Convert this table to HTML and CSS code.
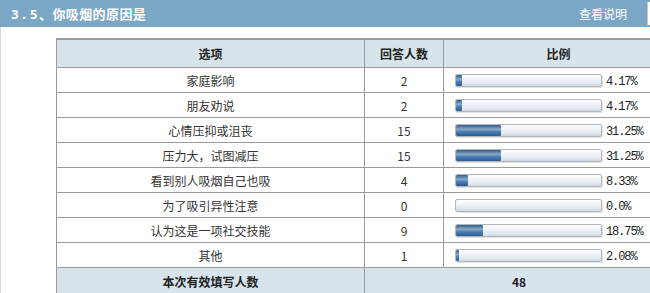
FILE: index.html
```html
<!DOCTYPE html>
<html lang="zh">
<head>
<meta charset="utf-8">
<link rel="stylesheet" href="styles.css">
</head>
<body>
<div class="page">
  <div class="qhead">
    <div class="qtitle"><span class="qnum">3.5</span>、你吸烟的原因是</div>
    <div class="qlink">查看说明</div>
    <div class="qbox"></div>
  </div>
  <div class="content">
    <table class="stat">
      <colgroup><col class="c1"><col class="c2"><col class="c3"></colgroup>
      <thead>
        <tr><th>选项</th><th>回答人数</th><th>比例</th></tr>
      </thead>
      <tbody>
        <tr><td>家庭影响</td><td>2</td><td><div class="pc"><span class="bar"><span class="fill" style="width:4.17%"></span></span><span class="pct">4.17%</span></div></td></tr>
        <tr><td>朋友劝说</td><td>2</td><td><div class="pc"><span class="bar"><span class="fill" style="width:4.17%"></span></span><span class="pct">4.17%</span></div></td></tr>
        <tr><td>心情压抑或沮丧</td><td>15</td><td><div class="pc"><span class="bar"><span class="fill" style="width:31.25%"></span></span><span class="pct">31.25%</span></div></td></tr>
        <tr><td>压力大，试图减压</td><td>15</td><td><div class="pc"><span class="bar"><span class="fill" style="width:31.25%"></span></span><span class="pct">31.25%</span></div></td></tr>
        <tr><td>看到别人吸烟自己也吸</td><td>4</td><td><div class="pc"><span class="bar"><span class="fill" style="width:8.33%"></span></span><span class="pct">8.33%</span></div></td></tr>
        <tr><td>为了吸引异性注意</td><td>0</td><td><div class="pc"><span class="bar"><span class="fill" style="width:0%"></span></span><span class="pct">0.0%</span></div></td></tr>
        <tr><td>认为这是一项社交技能</td><td>9</td><td><div class="pc"><span class="bar"><span class="fill" style="width:18.75%"></span></span><span class="pct">18.75%</span></div></td></tr>
        <tr><td>其他</td><td>1</td><td><div class="pc"><span class="bar"><span class="fill" style="width:2.08%"></span></span><span class="pct">2.08%</span></div></td></tr>
      </tbody>
      <tfoot>
        <tr><th>本次有效填写人数</th><th colspan="2">48</th></tr>
      </tfoot>
    </table>
  </div>
</div>
</body>
</html>
```

FILE: styles.css
```css
html, body {
  margin: 0;
  padding: 0;
  overflow: hidden;
  background: #fff;
}
body {
  font-family: "Noto Sans CJK SC", "DejaVu Sans", sans-serif;
  font-size: 12px;
  color: #333;
}
.page {
  width: 700px;
  height: 293px;
  border-left: 1px solid #d9d9d9;
  box-sizing: border-box;
}
.qhead {
  position: relative;
  height: 27px;
  margin-left: -1px;
  width: 650px;
  background: #7ba7c7;
  display: flex;
  align-items: center;
}
.qtitle {
  color: #fff;
  font-weight: bold;
  font-size: 13px;
  letter-spacing: 0.4px;
  padding-left: 11px;
  flex: 1;
  line-height: 27px;
}
.qnum {
  font-family: "DejaVu Sans Mono", "Liberation Mono", monospace;
  font-size: 13px;
  letter-spacing: 1.5px;
}
.qlink {
  color: #fff;
  font-size: 12px;
  margin-right: 23px;
  line-height: 27px;
}
.qbox {
  position: absolute;
  left: 647px;
  top: 2px;
  width: 3px;
  height: 23px;
  background: #fff;
  border-left: 1px solid #c8c8c8;
  box-sizing: border-box;
}
.content {
  padding: 11px 0 0 55px;
}
.stat {
  border-collapse: collapse;
  width: 617px;
  table-layout: fixed;
}
.c1 { width: 308px; }
.c2 { width: 79px; }
.c3 { width: 230px; }
.stat th, .stat td {
  border: 1px solid #9a9a9a;
  text-align: center;
  padding: 0;
}
.stat thead th {
  background: #d8e4ec;
  height: 27px;
  font-weight: bold;
  color: #222;
  border-top: 2px solid #9a9a9a;
}
.stat tbody td {
  height: 24px;
  color: #333;
}
.stat tfoot th {
  background: #d8e4ec;
  height: 26px;
  font-weight: bold;
  color: #222;
}
.pc {
  display: flex;
  align-items: center;
  padding-left: 11px;
}
.bar {
  display: block;
  position: relative;
  width: 147px;
  height: 13px;
  box-sizing: border-box;
  border: 1px solid #b4b8bd;
  border-radius: 2px;
  background: linear-gradient(to bottom, #fdfdfe 0%, #eef2f7 45%, #dfe6ee 80%, #cfd5dc 100%);
  overflow: hidden;
  box-shadow: 1px 1px 0 #e2e2e2;
}
.fill {
  display: block;
  height: 100%;
  border-radius: 1px;
  background: linear-gradient(to bottom, #2e5d8e 0%, #6b8db0 25%, #8aa7c6 40%, #4c7fb4 60%, #3a6fa6 80%, #2b5a8a 100%);
}
.pct {
  font-family: "Liberation Mono", "DejaVu Sans Mono", monospace;
  font-size: 12px;
  letter-spacing: -1.1px;
  color: #222;
  margin-left: 4px;
  padding-top: 4px;
}
```
